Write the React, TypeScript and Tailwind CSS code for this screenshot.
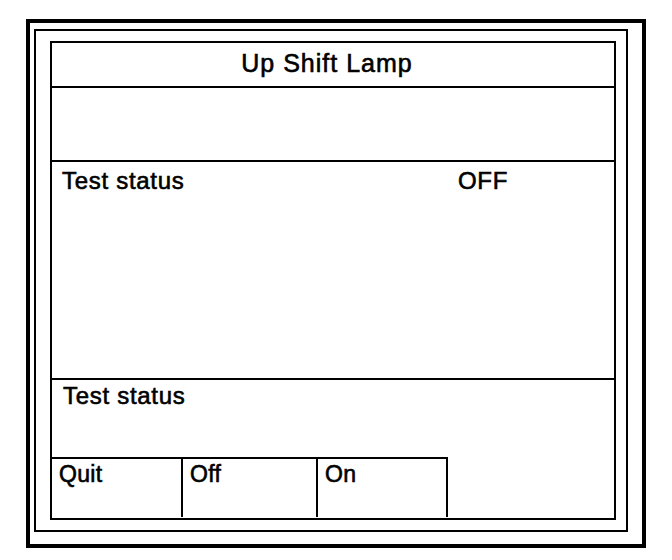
const font = { fontFamily: '"Liberation Sans", Arial, sans-serif' };

const Button = ({ label, width }: { label: string; width: string }) => {
  return (
    <div className={`${width} h-[60px] border-t-2 border-r-2 border-black pt-[1px] pl-[7px]`}>
      <span className="text-[23px] leading-[28px] tracking-[0.3px] text-black [-webkit-text-stroke:0.6px_black]">
        {label}
      </span>
    </div>
  );
};

export default function App() {
  return (
    <div className="w-[672px] h-[560px] bg-white pt-[19px] pl-[26px]" style={font}>
      <div className="w-[620px] h-[529px] border-4 border-black pt-[6px] pl-[4px]">
        <div className="w-[594px] h-[503px] border-2 border-black pt-[10px] pl-[14px]">
          <div className="w-[566px] h-[479px] border-2 border-black flex flex-col">
            <div className="h-[45px] border-b-2 border-black pt-[6px] pr-[12px] text-center">
              <span className="text-[25px] leading-[28px] tracking-[1px] text-black [-webkit-text-stroke:0.6px_black]">
                Up Shift Lamp
              </span>
            </div>
            <div className="h-[74px] border-b-2 border-black" />
            <div className="h-[218px] border-b-2 border-black pt-[5px] pl-[10px] flex">
              <span className="w-[396px] text-[24px] leading-[28px] tracking-[0.7px] text-black [-webkit-text-stroke:0.6px_black]">
                Test status
              </span>
              <span className="text-[24px] leading-[28px] tracking-[0.7px] text-black [-webkit-text-stroke:0.6px_black]">
                OFF
              </span>
            </div>
            <div className="h-[77px] pt-[2px] pl-[11px]">
              <span className="text-[24px] leading-[28px] tracking-[0.7px] text-black [-webkit-text-stroke:0.6px_black]">
                Test status
              </span>
            </div>
            <div className="flex">
              <Button label="Quit" width="w-[131px]" />
              <Button label="Off" width="w-[135px]" />
              <Button label="On" width="w-[130px]" />
            </div>
          </div>
        </div>
      </div>
    </div>
  );
}
